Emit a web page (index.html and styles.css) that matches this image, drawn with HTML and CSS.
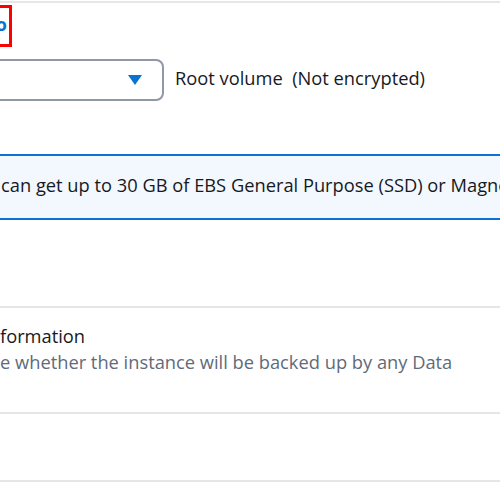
FILE: index.html
```html
<!DOCTYPE html>
<html>
<head>
<meta charset="utf-8">
<link rel="stylesheet" href="styles.css">
</head>
<body>
<div class="page">
  <section class="section first">
    <div class="info-row"><a class="info-link">o</a></div>
    <div class="row">
      <div class="select"><span class="caret"></span></div>
      <span class="label">Root volume&nbsp; (Not encrypted)</span>
    </div>
    <div class="alert">can get up to 30 GB of EBS General Purpose (SSD) or Magnetic storage.</div>
  </section>
  <section class="section second">
    <div class="title">formation</div>
    <div class="desc">e whether the instance will be backed up by any Data</div>
  </section>
  <section class="section third"></section>
  <section class="section fourth"></section>
</div>
</body>
</html>
```
FILE: styles.css
```css
html, body {
  margin: 0;
  padding: 0;
  background: #ffffff;
}
body {
  font-family: "Open Sans", "Noto Sans", sans-serif;
  color: #16191f;
  overflow: hidden;
  width: 500px;
  height: 500px;
}
.page {
  padding-top: 1px;
}
.section {
  border-top: 2px solid #e4e6e8;
}
.first {
  height: 303px;
}
.info-row {
  display: flex;
  margin-top: 2px;
}
.info-link {
  display: block;
  box-sizing: border-box;
  width: 40px;
  height: 42px;
  margin-left: -28px;
  border: 3px solid #ff0000;
  color: #0972d3;
  font-weight: 700;
  font-size: 18px;
  line-height: 18px;
  padding-top: 7px;
  text-align: right;
  padding-right: 2px;
}
.row {
  display: flex;
  align-items: center;
  margin-top: 12px;
}
.select {
  box-sizing: border-box;
  width: 200px;
  height: 42px;
  margin-left: -36px;
  border: 2px solid #8d99a8;
  border-radius: 8px;
  position: relative;
}
.caret {
  position: absolute;
  right: 20px;
  top: 14px;
  width: 0;
  height: 0;
  border-left: 7px solid transparent;
  border-right: 7px solid transparent;
  border-top: 10px solid #0972d3;
}
.label {
  margin-left: 11px;
  font-size: 18.3px;
  margin-top: -5px;
}
.alert {
  box-sizing: border-box;
  margin-top: 53px;
  margin-left: -20px;
  width: 540px;
  height: 66px;
  border: 2px solid #0972d3;
  background: #f2f8fd;
  font-size: 18.3px;
  line-height: 24px;
  padding: 17px 0 0 19px;
  white-space: nowrap;
  overflow: hidden;
}
.second {
  height: 106px;
  padding-top: 15px;
  box-sizing: border-box;
}
.title {
  font-size: 18.3px;
  line-height: 26px;
}
.desc {
  font-size: 18.3px;
  line-height: 26px;
  color: #5f6b7a;
}
.third {
  height: 66px;
}
.fourth {
  height: 20px;
}
```
